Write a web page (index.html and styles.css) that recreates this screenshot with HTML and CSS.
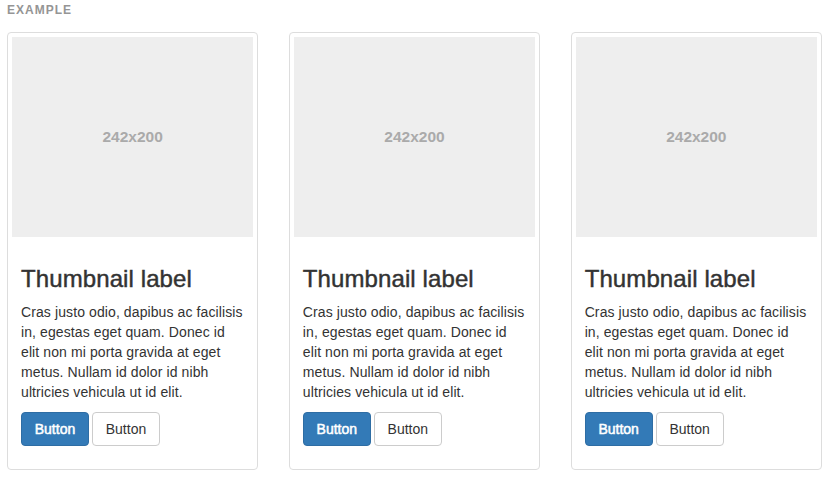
FILE: index.html
```html
<!DOCTYPE html>
<html>
<head>
<meta charset="utf-8">
<link rel="stylesheet" href="styles.css">
</head>
<body>
<div class="example">
  <div class="example-label">Example</div>
  <div class="row">
    <div class="thumbnail">
      <div class="placeholder">242x200</div>
      <div class="caption">
        <h3>Thumbnail label</h3>
        <p>Cras justo odio, dapibus ac facilisis in, egestas eget quam. Donec id elit non mi porta gravida at eget metus. Nullam id dolor id nibh ultricies vehicula ut id elit.</p>
        <p class="actions"><a class="btn btn-primary">Button</a> <a class="btn btn-default">Button</a></p>
      </div>
    </div>
    <div class="thumbnail">
      <div class="placeholder">242x200</div>
      <div class="caption">
        <h3>Thumbnail label</h3>
        <p>Cras justo odio, dapibus ac facilisis in, egestas eget quam. Donec id elit non mi porta gravida at eget metus. Nullam id dolor id nibh ultricies vehicula ut id elit.</p>
        <p class="actions"><a class="btn btn-primary">Button</a> <a class="btn btn-default">Button</a></p>
      </div>
    </div>
    <div class="thumbnail">
      <div class="placeholder">242x200</div>
      <div class="caption">
        <h3>Thumbnail label</h3>
        <p>Cras justo odio, dapibus ac facilisis in, egestas eget quam. Donec id elit non mi porta gravida at eget metus. Nullam id dolor id nibh ultricies vehicula ut id elit.</p>
        <p class="actions"><a class="btn btn-primary">Button</a> <a class="btn btn-default">Button</a></p>
      </div>
    </div>
  </div>
</div>
</body>
</html>
```

FILE: styles.css
```css
* { box-sizing: border-box; }
html, body {
  margin: 0;
  padding: 0;
  background: #fff;
}
body {
  font-family: "Liberation Sans", Arial, sans-serif;
  font-size: 14px;
  line-height: 20px;
  color: #333;
}
.example {
  padding: 3px 7px 0 7px;
}
.example-label {
  font-size: 12px;
  line-height: 14px;
  font-weight: 700;
  color: #959595;
  letter-spacing: 1px;
  text-transform: uppercase;
  height: 29px;
}
.row {
  display: flex;
  gap: 30.5px;
}
.thumbnail {
  width: 251.5px;
  padding: 4px;
  border: 1px solid #ddd;
  border-radius: 4px;
  background: #fff;
}
.placeholder {
  width: 100%;
  height: 200px;
  background: #eee;
  color: #aaa;
  font-weight: 700;
  font-size: 15.5px;
  display: flex;
  align-items: center;
  justify-content: center;
}
.caption {
  padding: 9px;
}
.caption h3 {
  margin: 20px 0 10px;
  font-size: 24px;
  line-height: 26.4px;
  font-weight: 400;
  letter-spacing: 0.1px;
  -webkit-text-stroke: 0.45px #333;
  color: #333;
}
.caption p {
  margin: 0 0 10px;
  letter-spacing: 0.1px;
}
.caption p.actions {
  display: flex;
  gap: 3px;
  letter-spacing: 0;
}
.btn {
  display: inline-block;
  width: 68px;
  padding: 6px 0;
  text-align: center;
  font-size: 14px;
  line-height: 20px;
  border: 1px solid transparent;
  border-radius: 4px;
  text-decoration: none;
  cursor: pointer;
}
.btn-primary {
  background: #337ab7;
  border-color: #2e6da4;
  color: #fff;
  -webkit-text-stroke: 0.5px #fff;
}
.btn-default {
  background: #fff;
  border-color: #ccc;
  color: #333;
}
```
